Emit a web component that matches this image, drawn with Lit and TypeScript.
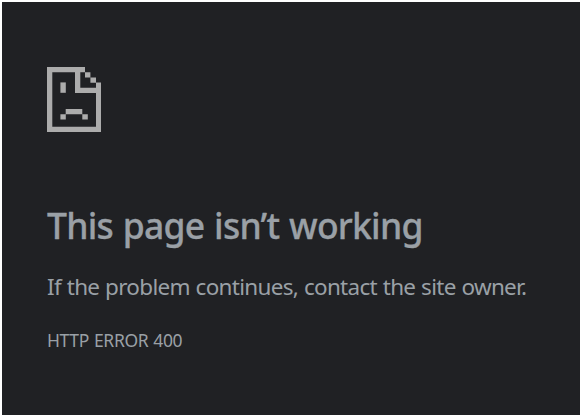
import { LitElement, html, css } from "lit";
import { customElement } from "lit/decorators.js";

@customElement("app-root")
export class AppRoot extends LitElement {
  static styles = css`
    :host {
      display: block;
      box-sizing: border-box;
      width: 582px;
      height: 417px;
      padding: 2px;
      background: #fff;
      overflow: hidden;
    }
    .page {
      box-sizing: border-box;
      height: 413px;
      padding: 65px 0 0 45px;
      background: #202124;
      color: #9aa0a6;
      font-family: "Segoe UI", "Noto Sans", "Open Sans", sans-serif;
      white-space: nowrap;
    }
    .icon {
      display: block;
      width: 54px;
      height: 65px;
      fill: #acacac;
    }
    h1 {
      margin: 69px 0 0;
      font-size: 35.5px;
      line-height: 48px;
      font-weight: 500;
      -webkit-text-stroke: 0.3px currentColor;
      letter-spacing: -0.77px;
      word-spacing: 1.3px;
    }
    p {
      margin: 22px 0 0;
      font-size: 22.5px;
      line-height: 32px;
      letter-spacing: -0.7px;
      word-spacing: 0.6px;
    }
    .code {
      margin-top: 25px;
      font-size: 17.5px;
      line-height: 24px;
      letter-spacing: -0.35px;
      word-spacing: 0.8px;
    }
  `;

  render() {
    return html`
      <main class="page">
        <svg class="icon" viewBox="0 0 54 65" aria-hidden="true">
          <path
            d="M0 0H38V5.3H33.3V20.7H49V15.5H54V65H0ZM5.3 5.3V59.7H49V26H28V5.3Z"
            fill-rule="evenodd"
          />
          <path d="M38 5.3h5.4v5.2H38zM43.4 10.5H49v5.2h-5.6z" />
          <path d="M13.4 15.4h5.4v10.4h-5.4z" />
          <path d="M18.7 42h16.6v5.2H18.7zM13.4 47.2h5.4v5.2h-5.4zM35.3 47.2h5.5v5.2h-5.5z" />
        </svg>
        <h1>This page isn’t working</h1>
        <p>If the problem continues, contact the site owner.</p>
        <p class="code">HTTP ERROR 400</p>
      </main>
    `;
  }
}
